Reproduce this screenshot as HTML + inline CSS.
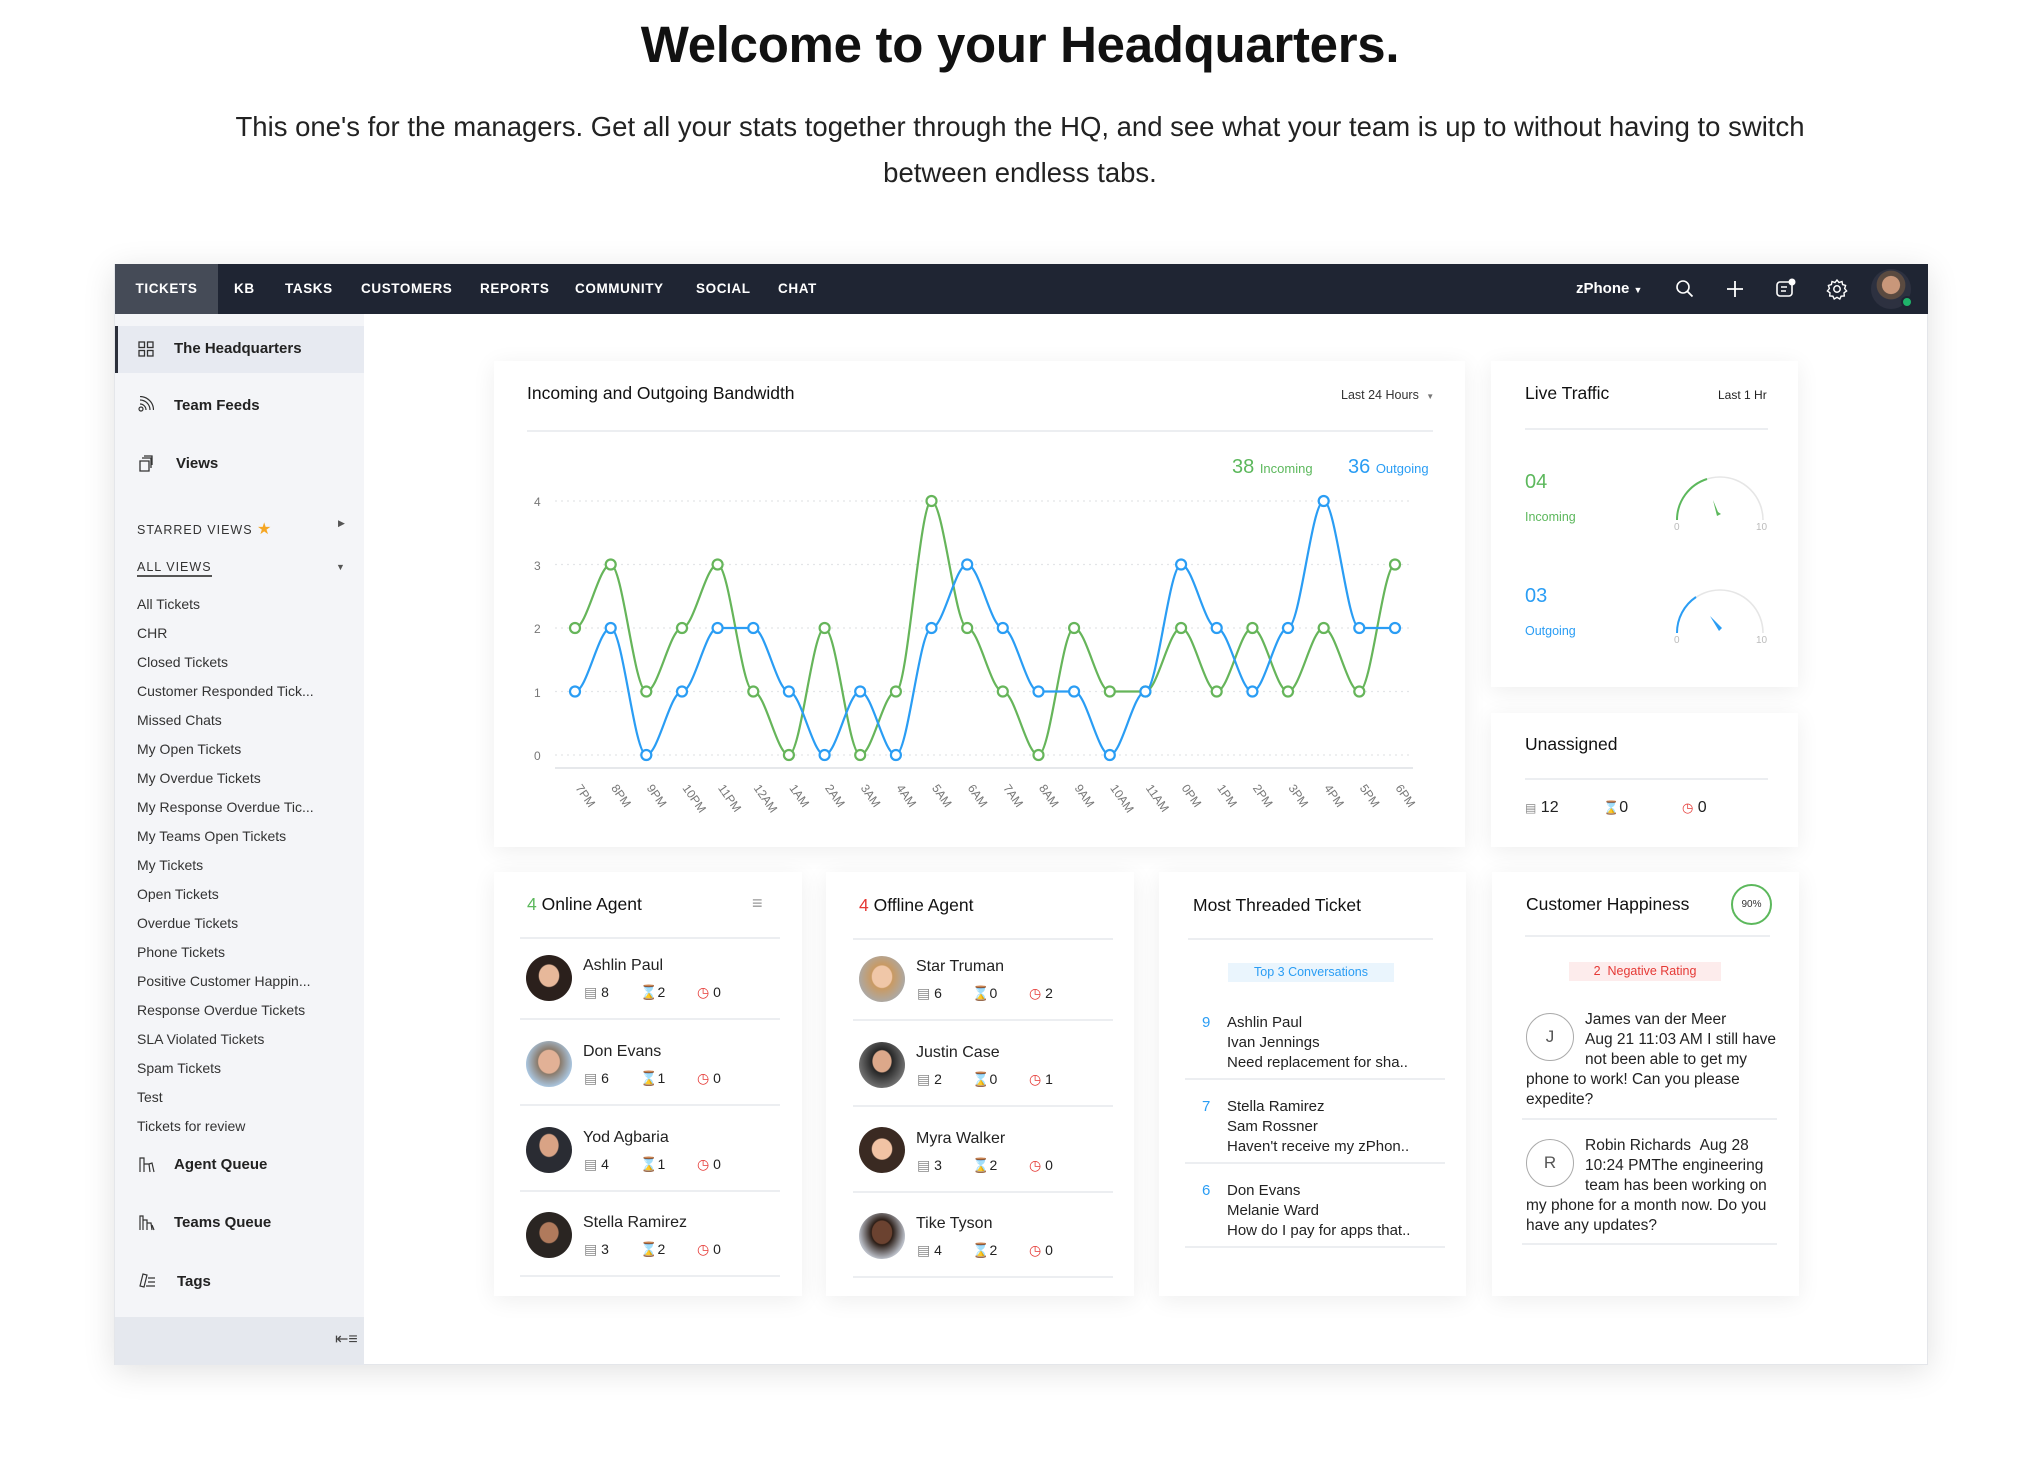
<!DOCTYPE html>
<html><head><meta charset="utf-8">
<style>
*{box-sizing:border-box;margin:0;padding:0}
body{width:2040px;height:1460px;overflow:hidden;background:#fff;font-family:"Liberation Sans",Arial,sans-serif;color:#222;position:relative}
.a{position:absolute;white-space:nowrap}
h1{position:absolute;left:0;width:2040px;top:15px;text-align:center;font-size:51px;font-weight:700;color:#111;letter-spacing:-0.3px}
.sub{position:absolute;left:190px;width:1660px;top:104px;text-align:center;font-size:27.5px;line-height:46px;color:#222}
.frame{position:absolute;left:114px;top:264px;width:1814px;height:1101px;background:#fff;box-shadow:0 6px 30px rgba(0,0,0,.12);border:1px solid #e4e6ea}
.nav{position:absolute;left:115px;top:264px;width:1813px;height:50px;background:#1f2533}
.nav .it{position:absolute;top:0;height:50px;line-height:50px;color:#fff;font-size:13.5px;font-weight:700;letter-spacing:.6px}
.side{position:absolute;left:115px;top:314px;width:249px;height:1051px;background:#f4f5f8}
.si{position:absolute;font-size:15px;font-weight:700;color:#222}
.sl{position:absolute;left:137px;font-size:14px;color:#333}
.card{position:absolute;background:#fff;box-shadow:0 4px 22px rgba(0,0,0,.07)}
.hr{position:absolute;height:2px;background:#eceef1}
.ct{font-size:17.5px;color:#111}
.nm{position:absolute;font-size:16px;color:#222}
.st{position:absolute;font-size:14px;color:#222}
.av{position:absolute;width:46px;height:46px;border-radius:50%;overflow:hidden}
.lbl{font-size:12px;fill:#777;font-family:"Liberation Sans",sans-serif}
</style></head><body>

<h1>Welcome to your Headquarters.</h1>
<div class="sub">This one's for the managers. Get all your stats together through the HQ, and see what your team is up to without having to switch between endless tabs.</div>

<div class="frame"></div>
<div class="nav">
  <div class="it" style="left:0;width:103px;background:#454b57;text-align:center">TICKETS</div>
  <div class="it" style="left:119px">KB</div>
  <div class="it" style="left:170px">TASKS</div>
  <div class="it" style="left:246px">CUSTOMERS</div>
  <div class="it" style="left:365px">REPORTS</div>
  <div class="it" style="left:460px">COMMUNITY</div>
  <div class="it" style="left:581px">SOCIAL</div>
  <div class="it" style="left:663px">CHAT</div>
  <div class="it" style="left:1461px;font-size:15px;letter-spacing:0">zPhone <span style="font-size:9px">&#9660;</span></div>
  <svg class="a" style="left:1560px;top:15px" width="20" height="20" viewBox="0 0 20 20"><circle cx="8" cy="8" r="6" fill="none" stroke="#fff" stroke-width="1.6"/><path d="M12.5 12.5l5 5" stroke="#fff" stroke-width="1.8"/></svg>
  <svg class="a" style="left:1610px;top:15px" width="20" height="20"><path d="M10 2v16M2 10h16" stroke="#fff" stroke-width="1.8"/></svg>
  <svg class="a" style="left:1660px;top:13px" width="22" height="22"><rect x="2" y="5" width="15" height="14" rx="3" fill="none" stroke="#fff" stroke-width="1.6"/><path d="M6 10h6M6 14h5" stroke="#fff" stroke-width="1.5"/><circle cx="17" cy="5" r="3.5" fill="#fff"/></svg>
  <svg class="a" style="left:1711px;top:14px" width="22" height="22" viewBox="0 0 22 22"><path d="M11 2l2 2.5 3-1 .6 3.1 3 .9-1 3 2 2.5-2.6 1.8.3 3.2-3.2.2L13.8 21 11 19.3 8.2 21l-1.3-2.8-3.2-.2.3-3.2L1.4 13l2-2.5-1-3 3-.9L6 3.5l3 1z" fill="none" stroke="#fff" stroke-width="1.4"/><circle cx="11" cy="11" r="3.2" fill="none" stroke="#fff" stroke-width="1.5"/></svg>
  <div class="a" style="left:1756px;top:5px;width:40px;height:40px;border-radius:50%;background:radial-gradient(circle at 50% 40%,#c9977a 0 28%,#5a4a40 30% 45%,#2d3140 47%)"></div>
  <div class="a" style="left:1786px;top:32px;width:12px;height:12px;border-radius:50%;background:#1fb46a;border:2px solid #1f2533"></div>
</div>

<div class="side">
  <div class="a" style="left:0;top:12px;width:249px;height:47px;background:#e7eaf1;border-left:3px solid #2b2f3a"></div>
  <div class="a" style="left:0;top:1003px;width:249px;height:48px;background:#e5e8ee"></div>
  <div class="a" style="left:220px;top:1015px;font-size:16px;color:#444">&#8676;&#8801;</div>
</div>
<svg class="a" style="left:138px;top:341px" width="16" height="16"><rect x="1" y="1" width="5.5" height="5.5" fill="none" stroke="#333" stroke-width="1.3"/><rect x="9.5" y="1" width="5.5" height="5.5" fill="none" stroke="#333" stroke-width="1.3"/><rect x="1" y="9.5" width="5.5" height="5.5" fill="none" stroke="#333" stroke-width="1.3"/><rect x="9.5" y="9.5" width="5.5" height="5.5" fill="none" stroke="#333" stroke-width="1.3"/></svg>
<div class="si" style="left:174px;top:340px">The Headquarters</div>
<svg class="a" style="left:138px;top:396px" width="16" height="16"><circle cx="3" cy="13" r="2" fill="none" stroke="#333" stroke-width="1.2"/><path d="M2 8a6 6 0 0 1 6 6M2 4a10 10 0 0 1 10 10M2 0.5a13.5 13.5 0 0 1 13.5 13.5" fill="none" stroke="#333" stroke-width="1.2"/></svg>
<div class="si" style="left:174px;top:397px">Team Feeds</div>
<svg class="a" style="left:138px;top:455px" width="16" height="17"><path d="M2 6h9v10H2zM4 3h9v10M6 1h8v9" fill="none" stroke="#333" stroke-width="1.3"/></svg>
<div class="si" style="left:176px;top:455px">Views</div>
<div class="a" style="left:137px;top:519px;font-size:12.5px;letter-spacing:1px;color:#333">STARRED VIEWS <span style="color:#f5a623;font-size:16px">&#9733;</span></div>
<div class="a" style="left:338px;top:518px;font-size:9px;color:#555">&#9654;</div>
<div class="a" style="left:137px;top:560px;font-size:12.5px;letter-spacing:1px;color:#333;border-bottom:2px solid #555;padding-bottom:1px">ALL VIEWS</div>
<div class="a" style="left:336px;top:562px;font-size:9px;color:#555">&#9660;</div>
<div class="sl" style="top:596px">All Tickets</div>
<div class="sl" style="top:625px">CHR</div>
<div class="sl" style="top:654px">Closed Tickets</div>
<div class="sl" style="top:683px">Customer Responded Tick...</div>
<div class="sl" style="top:712px">Missed Chats</div>
<div class="sl" style="top:741px">My Open Tickets</div>
<div class="sl" style="top:770px">My Overdue Tickets</div>
<div class="sl" style="top:799px">My Response Overdue Tic...</div>
<div class="sl" style="top:828px">My Teams Open Tickets</div>
<div class="sl" style="top:857px">My Tickets</div>
<div class="sl" style="top:886px">Open Tickets</div>
<div class="sl" style="top:915px">Overdue Tickets</div>
<div class="sl" style="top:944px">Phone Tickets</div>
<div class="sl" style="top:973px">Positive Customer Happin...</div>
<div class="sl" style="top:1002px">Response Overdue Tickets</div>
<div class="sl" style="top:1031px">SLA Violated Tickets</div>
<div class="sl" style="top:1060px">Spam Tickets</div>
<div class="sl" style="top:1089px">Test</div>
<div class="sl" style="top:1118px">Tickets for review</div>
<svg class="a" style="left:138px;top:1156px" width="17" height="17"><path d="M2 16V2h4v14M6 8h5l1 8M11 8l3-1 2 9" fill="none" stroke="#333" stroke-width="1.2"/></svg>
<div class="si" style="left:174px;top:1156px">Agent Queue</div>
<svg class="a" style="left:138px;top:1214px" width="17" height="17"><path d="M2 16V2h3v14M5 6h4v10M9 9h4l1 7M14 11l2 5" fill="none" stroke="#333" stroke-width="1.2"/></svg>
<div class="si" style="left:174px;top:1214px">Teams Queue</div>
<svg class="a" style="left:138px;top:1272px" width="18" height="17"><path d="M2 14l3-12 4 1-3 12zM10 6h7M10 10h7M8 14h9" fill="none" stroke="#333" stroke-width="1.2"/></svg>
<div class="si" style="left:177px;top:1273px">Tags</div>

<!-- Bandwidth card -->
<div class="card" style="left:494px;top:361px;width:971px;height:486px"></div>
<div class="a ct" style="left:527px;top:383px">Incoming and Outgoing Bandwidth</div>
<div class="a" style="left:1341px;top:388px;font-size:12.5px;color:#333">Last 24 Hours <span style="font-size:8px;color:#777;margin-left:4px">&#9660;</span></div>
<div class="hr" style="left:527px;top:430px;width:906px"></div>
<div class="a" style="left:1232px;top:456px;font-size:20px;color:#5cb85c">38 <span style="font-size:13px">Incoming</span></div>
<div class="a" style="left:1348px;top:456px;font-size:20px;color:#2a9df4">36 <span style="font-size:13px">Outgoing</span></div>
<svg class="a" style="left:0;top:0" width="2040" height="1460">
  <g stroke="#e3e5e8" stroke-width="1.2" stroke-dasharray="2 4">
    <path d="M555 501H1410M555 564.5H1410M555 628H1410M555 691.5H1410M555 755H1410"/>
  </g>
  <path d="M555 768H1413" stroke="#e6e8eb" stroke-width="2"/>
  <g class="lbl"><text x="534" y="506">4</text><text x="534" y="570">3</text><text x="534" y="633">2</text><text x="534" y="697">1</text><text x="534" y="760">0</text></g>
  <g class="lbl">
    <text transform="translate(575,788) rotate(55)">7PM</text>
    <text transform="translate(610.7,788) rotate(55)">8PM</text>
    <text transform="translate(646.3,788) rotate(55)">9PM</text>
    <text transform="translate(682,788) rotate(55)">10PM</text>
    <text transform="translate(717.6,788) rotate(55)">11PM</text>
    <text transform="translate(753.3,788) rotate(55)">12AM</text>
    <text transform="translate(788.9,788) rotate(55)">1AM</text>
    <text transform="translate(824.6,788) rotate(55)">2AM</text>
    <text transform="translate(860.2,788) rotate(55)">3AM</text>
    <text transform="translate(895.9,788) rotate(55)">4AM</text>
    <text transform="translate(931.5,788) rotate(55)">5AM</text>
    <text transform="translate(967.2,788) rotate(55)">6AM</text>
    <text transform="translate(1002.8,788) rotate(55)">7AM</text>
    <text transform="translate(1038.5,788) rotate(55)">8AM</text>
    <text transform="translate(1074.1,788) rotate(55)">9AM</text>
    <text transform="translate(1109.8,788) rotate(55)">10AM</text>
    <text transform="translate(1145.4,788) rotate(55)">11AM</text>
    <text transform="translate(1181.1,788) rotate(55)">0PM</text>
    <text transform="translate(1216.7,788) rotate(55)">1PM</text>
    <text transform="translate(1252.4,788) rotate(55)">2PM</text>
    <text transform="translate(1288,788) rotate(55)">3PM</text>
    <text transform="translate(1323.7,788) rotate(55)">4PM</text>
    <text transform="translate(1359.3,788) rotate(55)">5PM</text>
    <text transform="translate(1395,788) rotate(55)">6PM</text>
  </g>
  <path fill="none" stroke="#66b55a" stroke-width="2.2" d="M575 628 C587 628 598.7 564.5 610.7 564.5 S634.3 691.5 646.3 691.5 S670 628 682 628 S705.6 564.5 717.6 564.5 S741.3 691.5 753.3 691.5 S776.9 755 788.9 755 S812.6 628 824.6 628 S848.2 755 860.2 755 S883.9 691.5 895.9 691.5 S919.5 501 931.5 501 S955.2 628 967.2 628 S990.8 691.5 1002.8 691.5 S1026.5 755 1038.5 755 S1062.1 628 1074.1 628 S1097.8 691.5 1109.8 691.5 S1133.4 691.5 1145.4 691.5 S1169.1 628 1181.1 628 S1204.7 691.5 1216.7 691.5 S1240.4 628 1252.4 628 S1276 691.5 1288 691.5 S1311.7 628 1323.7 628 S1347.3 691.5 1359.3 691.5 S1383 564.5 1395 564.5"/>
  <path fill="none" stroke="#2a9df4" stroke-width="2.2" d="M575 691.5 C587 691.5 598.7 628 610.7 628 S634.3 755 646.3 755 S670 691.5 682 691.5 S705.6 628 717.6 628 S741.3 628 753.3 628 S776.9 691.5 788.9 691.5 S812.6 755 824.6 755 S848.2 691.5 860.2 691.5 S883.9 755 895.9 755 S919.5 628 931.5 628 S955.2 564.5 967.2 564.5 S990.8 628 1002.8 628 S1026.5 691.5 1038.5 691.5 S1062.1 691.5 1074.1 691.5 S1097.8 755 1109.8 755 S1133.4 691.5 1145.4 691.5 S1169.1 564.5 1181.1 564.5 S1204.7 628 1216.7 628 S1240.4 691.5 1252.4 691.5 S1276 628 1288 628 S1311.7 501 1323.7 501 S1347.3 628 1359.3 628 S1383 628 1395 628"/>
  <g fill="#fff" stroke="#66b55a" stroke-width="2.2">
    <circle cx="575" cy="628" r="5"/><circle cx="610.7" cy="564.5" r="5"/><circle cx="646.3" cy="691.5" r="5"/><circle cx="682" cy="628" r="5"/><circle cx="717.6" cy="564.5" r="5"/><circle cx="753.3" cy="691.5" r="5"/><circle cx="788.9" cy="755" r="5"/><circle cx="824.6" cy="628" r="5"/><circle cx="860.2" cy="755" r="5"/><circle cx="895.9" cy="691.5" r="5"/><circle cx="931.5" cy="501" r="5"/><circle cx="967.2" cy="628" r="5"/><circle cx="1002.8" cy="691.5" r="5"/><circle cx="1038.5" cy="755" r="5"/><circle cx="1074.1" cy="628" r="5"/><circle cx="1109.8" cy="691.5" r="5"/><circle cx="1145.4" cy="691.5" r="5"/><circle cx="1181.1" cy="628" r="5"/><circle cx="1216.7" cy="691.5" r="5"/><circle cx="1252.4" cy="628" r="5"/><circle cx="1288" cy="691.5" r="5"/><circle cx="1323.7" cy="628" r="5"/><circle cx="1359.3" cy="691.5" r="5"/><circle cx="1395" cy="564.5" r="5"/>
  </g>
  <g fill="#fff" stroke="#2a9df4" stroke-width="2.2">
    <circle cx="575" cy="691.5" r="5"/><circle cx="610.7" cy="628" r="5"/><circle cx="646.3" cy="755" r="5"/><circle cx="682" cy="691.5" r="5"/><circle cx="717.6" cy="628" r="5"/><circle cx="753.3" cy="628" r="5"/><circle cx="788.9" cy="691.5" r="5"/><circle cx="824.6" cy="755" r="5"/><circle cx="860.2" cy="691.5" r="5"/><circle cx="895.9" cy="755" r="5"/><circle cx="931.5" cy="628" r="5"/><circle cx="967.2" cy="564.5" r="5"/><circle cx="1002.8" cy="628" r="5"/><circle cx="1038.5" cy="691.5" r="5"/><circle cx="1074.1" cy="691.5" r="5"/><circle cx="1109.8" cy="755" r="5"/><circle cx="1145.4" cy="691.5" r="5"/><circle cx="1181.1" cy="564.5" r="5"/><circle cx="1216.7" cy="628" r="5"/><circle cx="1252.4" cy="691.5" r="5"/><circle cx="1288" cy="628" r="5"/><circle cx="1323.7" cy="501" r="5"/><circle cx="1359.3" cy="628" r="5"/><circle cx="1395" cy="628" r="5"/>
  </g>
</svg>

<!-- Live traffic -->
<div class="card" style="left:1491px;top:361px;width:307px;height:326px"></div>
<div class="a ct" style="left:1525px;top:383px">Live Traffic</div>
<div class="a" style="left:1718px;top:388px;font-size:12px;color:#222">Last 1 Hr</div>
<div class="hr" style="left:1525px;top:428px;width:243px"></div>
<div class="a" style="left:1525px;top:471px;font-size:20px;color:#5cb85c">04</div>
<div class="a" style="left:1525px;top:510px;font-size:12.5px;color:#5cb85c">Incoming</div>
<div class="a" style="left:1525px;top:585px;font-size:20px;color:#2a9df4">03</div>
<div class="a" style="left:1525px;top:624px;font-size:12.5px;color:#2a9df4">Outgoing</div>
<svg class="a" style="left:0;top:0" width="2040" height="1460">
  <path d="M1677 520A43 43 0 0 1 1763 520" fill="none" stroke="#e6e6e6" stroke-width="1.6"/>
  <path d="M1677 520A43 43 0 0 1 1707 479" fill="none" stroke="#5cb85c" stroke-width="2"/>
  <path d="M1713 500L1718 512 1721 514 1717 516z" fill="#5cb85c"/>
  <text x="1674" y="530" class="lbl" style="font-size:10px;fill:#bbb">0</text><text x="1756" y="530" class="lbl" style="font-size:10px;fill:#bbb">10</text>
  <path d="M1677 633A43 43 0 0 1 1763 633" fill="none" stroke="#e6e6e6" stroke-width="1.6"/>
  <path d="M1677 633A43 43 0 0 1 1696 597" fill="none" stroke="#2a9df4" stroke-width="2"/>
  <path d="M1710 616L1722 628 1719 631z" fill="#2a9df4"/>
  <text x="1674" y="643" class="lbl" style="font-size:10px;fill:#bbb">0</text><text x="1756" y="643" class="lbl" style="font-size:10px;fill:#bbb">10</text>
</svg>

<!-- Unassigned -->
<div class="card" style="left:1491px;top:713px;width:307px;height:134px"></div>
<div class="a ct" style="left:1525px;top:734px">Unassigned</div>
<div class="hr" style="left:1525px;top:778px;width:243px"></div>
<div class="a" style="left:1525px;top:799px;font-size:16px"><span style="color:#888;font-size:12px">&#9636;</span> 12</div>
<div class="a" style="left:1603px;top:799px;font-size:16px"><span style="color:#e53935;font-size:13px">&#8987;</span>0</div>
<div class="a" style="left:1682px;top:799px;font-size:16px"><span style="color:#e53935;font-size:13px">&#9719;</span> 0</div>

<!-- Online agent -->
<div class="card" style="left:494px;top:872px;width:308px;height:424px"></div>
<div class="a ct" style="left:527px;top:894px"><span style="color:#5cb85c">4</span> Online Agent</div>
<div class="a" style="left:752px;top:893px;color:#999;font-size:18px">&#8801;</div>
<div class="hr" style="left:520px;top:937px;width:260px"></div>

<!-- Offline agent -->
<div class="card" style="left:826px;top:872px;width:308px;height:424px"></div>
<div class="a ct" style="left:859px;top:895px"><span style="color:#e53935">4</span> Offline Agent</div>
<div class="hr" style="left:853px;top:938px;width:260px"></div>

<!-- agent rows, online -->
<div class="av" style="left:526px;top:955px;background:radial-gradient(ellipse at 50% 45%,#e7b89a 0 30%,#2b201c 33%)"></div>
<div class="nm" style="left:583px;top:957px">Ashlin Paul</div>
<div class="st" style="left:584px;top:984px"><span style="color:#888">&#9636;</span> 8</div><div class="st" style="left:640px;top:984px"><span style="color:#e53935">&#8987;</span>2</div><div class="st" style="left:697px;top:984px"><span style="color:#e53935">&#9719;</span> 0</div>
<div class="hr" style="left:520px;top:1018px;width:260px"></div>

<div class="av" style="left:526px;top:1041px;background:radial-gradient(ellipse at 50% 45%,#e2b196 0 32%,#8a7b6c 35%,#a9c4dd 70%)"></div>
<div class="nm" style="left:583px;top:1043px">Don Evans</div>
<div class="st" style="left:584px;top:1070px"><span style="color:#888">&#9636;</span> 6</div><div class="st" style="left:640px;top:1070px"><span style="color:#e53935">&#8987;</span>1</div><div class="st" style="left:697px;top:1070px"><span style="color:#e53935">&#9719;</span> 0</div>
<div class="hr" style="left:520px;top:1104px;width:260px"></div>

<div class="av" style="left:526px;top:1127px;background:radial-gradient(ellipse at 50% 40%,#d9a385 0 28%,#2a2c33 31%)"></div>
<div class="nm" style="left:583px;top:1129px">Yod Agbaria</div>
<div class="st" style="left:584px;top:1156px"><span style="color:#888">&#9636;</span> 4</div><div class="st" style="left:640px;top:1156px"><span style="color:#e53935">&#8987;</span>1</div><div class="st" style="left:697px;top:1156px"><span style="color:#e53935">&#9719;</span> 0</div>
<div class="hr" style="left:520px;top:1190px;width:260px"></div>

<div class="av" style="left:526px;top:1212px;background:radial-gradient(ellipse at 50% 45%,#b07a5c 0 28%,#2a2522 31%)"></div>
<div class="nm" style="left:583px;top:1214px">Stella Ramirez</div>
<div class="st" style="left:584px;top:1241px"><span style="color:#888">&#9636;</span> 3</div><div class="st" style="left:640px;top:1241px"><span style="color:#e53935">&#8987;</span>2</div><div class="st" style="left:697px;top:1241px"><span style="color:#e53935">&#9719;</span> 0</div>
<div class="hr" style="left:520px;top:1275px;width:260px"></div>

<!-- offline rows -->
<div class="av" style="left:859px;top:956px;background:radial-gradient(ellipse at 50% 45%,#f0c7a8 0 30%,#c99a63 33%,#aaa 75%)"></div>
<div class="nm" style="left:916px;top:958px">Star Truman</div>
<div class="st" style="left:917px;top:985px"><span style="color:#888">&#9636;</span> 6</div><div class="st" style="left:972px;top:985px"><span style="color:#e53935">&#8987;</span>0</div><div class="st" style="left:1029px;top:985px"><span style="color:#e53935">&#9719;</span> 2</div>
<div class="hr" style="left:853px;top:1019px;width:260px"></div>

<div class="av" style="left:859px;top:1042px;background:radial-gradient(ellipse at 50% 42%,#dca88a 0 28%,#262626 31%,#777 75%)"></div>
<div class="nm" style="left:916px;top:1044px">Justin Case</div>
<div class="st" style="left:917px;top:1071px"><span style="color:#888">&#9636;</span> 2</div><div class="st" style="left:972px;top:1071px"><span style="color:#e53935">&#8987;</span>0</div><div class="st" style="left:1029px;top:1071px"><span style="color:#e53935">&#9719;</span> 1</div>
<div class="hr" style="left:853px;top:1105px;width:260px"></div>

<div class="av" style="left:859px;top:1127px;background:radial-gradient(ellipse at 50% 48%,#f1c3a4 0 30%,#3a2a22 33%)"></div>
<div class="nm" style="left:916px;top:1130px">Myra Walker</div>
<div class="st" style="left:917px;top:1157px"><span style="color:#888">&#9636;</span> 3</div><div class="st" style="left:972px;top:1157px"><span style="color:#e53935">&#8987;</span>2</div><div class="st" style="left:1029px;top:1157px"><span style="color:#e53935">&#9719;</span> 0</div>
<div class="hr" style="left:853px;top:1191px;width:260px"></div>

<div class="av" style="left:859px;top:1213px;background:radial-gradient(ellipse at 50% 42%,#6b4230 0 30%,#2b1d16 33%,#b9bdc6 70%)"></div>
<div class="nm" style="left:916px;top:1215px">Tike Tyson</div>
<div class="st" style="left:917px;top:1242px"><span style="color:#888">&#9636;</span> 4</div><div class="st" style="left:972px;top:1242px"><span style="color:#e53935">&#8987;</span>2</div><div class="st" style="left:1029px;top:1242px"><span style="color:#e53935">&#9719;</span> 0</div>
<div class="hr" style="left:853px;top:1276px;width:260px"></div>

<!-- Most threaded -->
<div class="card" style="left:1159px;top:872px;width:307px;height:424px"></div>
<div class="a ct" style="left:1193px;top:895px">Most Threaded Ticket</div>
<div class="hr" style="left:1188px;top:938px;width:245px"></div>
<div class="a" style="left:1228px;top:963px;width:166px;height:19px;background:#eaf5fd;color:#2a9df4;font-size:12.5px;text-align:center;line-height:19px">Top 3 Conversations</div>
<div style="position:absolute;left:1202px;top:1013px;font-size:15px;line-height:20px;color:#222">
<div class="a" style="left:0;top:0;color:#2a9df4">9</div>
<div class="a" style="left:25px;top:0">Ashlin Paul<br>Ivan Jennings<br>Need replacement for sha..</div>
<div class="a" style="left:0;top:84px;color:#2a9df4">7</div>
<div class="a" style="left:25px;top:84px">Stella Ramirez<br>Sam Rossner<br>Haven't receive my zPhon..</div>
<div class="a" style="left:0;top:168px;color:#2a9df4">6</div>
<div class="a" style="left:25px;top:168px">Don Evans<br>Melanie Ward<br>How do I pay for apps that..</div>
</div>
<div class="hr" style="left:1185px;top:1078px;width:260px"></div>
<div class="hr" style="left:1185px;top:1162px;width:260px"></div>
<div class="hr" style="left:1185px;top:1246px;width:260px"></div>

<!-- Customer happiness -->
<div class="card" style="left:1492px;top:872px;width:307px;height:424px"></div>
<div class="a ct" style="left:1526px;top:894px">Customer Happiness</div>
<div class="a" style="left:1731px;top:884px;width:41px;height:41px;border-radius:50%;border:2px solid #5cb85c;font-size:10px;text-align:center;line-height:37px;color:#333">90%</div>
<div class="hr" style="left:1525px;top:935px;width:245px"></div>
<div class="a" style="left:1569px;top:962px;width:152px;height:19px;background:#fdecec;color:#e53935;font-size:12.5px;text-align:center;line-height:19px">2&nbsp; Negative Rating</div>
<div style="position:absolute;left:1526px;top:1010px;width:250px;font-size:15.5px;line-height:20px;color:#222;white-space:normal">
<div style="float:left;width:48px;height:48px;border-radius:50%;border:1.5px solid #aaa;text-align:center;line-height:45px;color:#555;font-size:17px;margin:3px 11px 0 0">J</div>James van der Meer<br>Aug 21 11:03 AM I still have not been able to get my phone to work! Can you please expedite?</div>
<div class="hr" style="left:1522px;top:1118px;width:255px"></div>
<div style="position:absolute;left:1526px;top:1136px;width:250px;font-size:15.5px;line-height:20px;color:#222;white-space:normal">
<div style="float:left;width:48px;height:48px;border-radius:50%;border:1.5px solid #aaa;text-align:center;line-height:45px;color:#555;font-size:17px;margin:3px 11px 0 0">R</div>Robin Richards &nbsp;Aug 28<br>10:24 PMThe engineering team has been working on my phone for a month now. Do you have any updates?</div>
<div class="hr" style="left:1522px;top:1243px;width:255px"></div>

</body></html>
